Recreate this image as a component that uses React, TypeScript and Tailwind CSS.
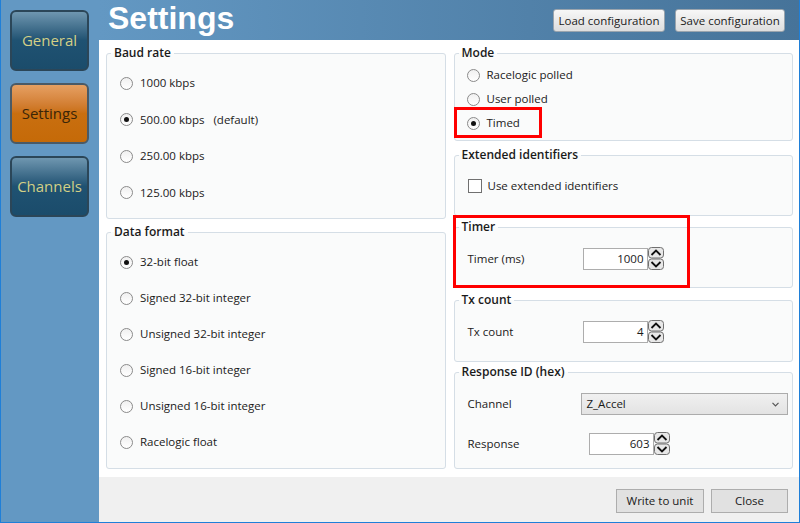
import type { ReactNode } from 'react'

const font = { fontFamily: '"Open Sans", "Noto Sans", sans-serif' }

function NavButton({ label, active }: { label: string; active?: boolean }) {
  return (
    <div
      className={
        'h-[61px] w-[79px] rounded-[6px] border-2 flex items-center justify-center text-[15px] ' +
        (active
          ? 'border-[#4a5a66] bg-gradient-to-b from-[#e6a062] via-[#c96f10] to-[#c56a08] text-[#3a2508]'
          : 'border-[#2b4658] bg-gradient-to-b from-[#6f97b0] via-[#1f5272] to-[#1b4c6b] text-[#d3cf86]')
      }
    >
      {label}
    </div>
  )
}

function Group({
  title,
  className,
  children,
}: {
  title: string
  className?: string
  children: ReactNode
}) {
  return (
    <fieldset
      className={
        'border border-[#d5dee6] rounded-[3px] bg-[#fafbfb] px-0 ' + (className ?? '')
      }
    >
      <legend className="ml-[4px] px-[3px] text-[12px] leading-[16px] font-semibold text-[#1a1a1a]">
        {title}
      </legend>
      {children}
    </fieldset>
  )
}

function Radio({ label, checked }: { label: ReactNode; checked?: boolean }) {
  return (
    <div className="flex items-center h-[16px] gap-[7px]">
      <div className="w-[13px] h-[13px] rounded-full border border-[#8a8a8a] bg-gradient-to-b from-[#f0f0f0] to-white flex items-center justify-center">
        {checked && <div className="w-[5px] h-[5px] rounded-full bg-[#111]" />}
      </div>
      <span className="text-[11.5px] text-[#1a1a1a]">{label}</span>
    </div>
  )
}

function Spinner() {
  return (
    <svg width="16" height="23" viewBox="0 0 16 23" className="shrink-0">
      <rect x="0.5" y="0.5" width="15" height="10.5" rx="3" fill="#e8e8e8" stroke="#707070" />
      <rect x="0.5" y="12" width="15" height="10.5" rx="3" fill="#e8e8e8" stroke="#707070" />
      <path d="M3.5 8 L8 3.5 L12.5 8" fill="none" stroke="#111" strokeWidth="1.8" />
      <path d="M3.5 15 L8 19.5 L12.5 15" fill="none" stroke="#111" strokeWidth="1.8" />
    </svg>
  )
}

function NumberField({ value, width = 65 }: { value: string; width?: number }) {
  return (
    <div className="flex items-center">
      <div
        className="h-[22px] border border-[#adadad] bg-white flex items-center justify-end pr-[3px] text-[11.5px] text-[#1a1a1a]"
        style={{ width }}
      >
        {value}
      </div>
      <Spinner />
    </div>
  )
}

export default function App() {
  return (
    <div
      className="w-[800px] h-[523px] flex bg-[#6398c3] border-x border-b border-[#1f7fd8] overflow-hidden"
      style={font}
    >
      <div className="w-[98px] shrink-0 flex flex-col gap-[12px] pl-[9px] pt-[10px]">
        <NavButton label="General" />
        <NavButton label="Settings" active />
        <NavButton label="Channels" />
      </div>

      <div className="flex-1 flex flex-col">
        <div className="h-[40px] shrink-0 flex items-center justify-between pl-[9px] pr-[14px] bg-gradient-to-r from-[#6398c3] to-[#467399]">
          <h1
            className="text-[32px] font-bold text-white leading-none -mt-[4px]"
            style={{ fontFamily: '"Liberation Sans", Arial, sans-serif' }}
          >
            Settings
          </h1>
          <div className="flex gap-[10px] mt-[1px]">
            <button className="h-[23px] w-[112px] rounded-[3px] border border-[#9aa4ad] bg-gradient-to-b from-[#f7f7f7] to-[#dedede] text-[11.5px] text-[#1a1a1a]">
              Load configuration
            </button>
            <button className="h-[23px] w-[110px] rounded-[3px] border border-[#9aa4ad] bg-gradient-to-b from-[#f7f7f7] to-[#dedede] text-[11.5px] text-[#1a1a1a]">
              Save configuration
            </button>
          </div>
        </div>

        <div className="h-[437px] shrink-0 bg-white grid grid-cols-2 gap-[8px] pl-[7px] pr-[6px] pt-[5px]">
          <div className="flex flex-col gap-[5px]">
            <Group title="Baud rate" className="h-[174px]">
              <div className="flex flex-col gap-[20.5px] pl-[13px] pt-[14px]">
                <Radio label="1000 kbps" />
                <Radio
                  label={
                    <>
                      500.00 kbps <span className="ml-[6px]">(default)</span>
                    </>
                  }
                  checked
                />
                <Radio label="250.00 kbps" />
                <Radio label="125.00 kbps" />
              </div>
            </Group>
            <Group title="Data format" className="h-[245px]">
              <div className="flex flex-col gap-[20px] pl-[13px] pt-[14px]">
                <Radio label="32-bit float" checked />
                <Radio label="Signed 32-bit integer" />
                <Radio label="Unsigned 32-bit integer" />
                <Radio label="Signed 16-bit integer" />
                <Radio label="Unsigned 16-bit integer" />
                <Radio label="Racelogic float" />
              </div>
            </Group>
          </div>

          <div className="flex flex-col">
            <Group title="Mode" className="h-[96px]">
              <div className="flex flex-col gap-[8px] pl-[12px] pt-[6px]">
                <Radio label="Racelogic polled" />
                <Radio label="User polled" />
                <div className="relative">
                  <div className="absolute -left-[13px] -top-[8px] w-[88px] h-[31px] border-[3px] border-[#ff0000]" />
                  <Radio label="Timed" checked />
                </div>
              </div>
            </Group>

            <Group title="Extended identifiers" className="h-[69px] mt-[6px]">
              <div className="flex items-center gap-[6px] pl-[13px] pt-[14px]">
                <div className="w-[14px] h-[14px] border border-[#707070] bg-white" />
                <span className="text-[11.5px] text-[#1a1a1a]">Use extended identifiers</span>
              </div>
            </Group>

            <div className="relative mt-[3px]">
              <div className="absolute -left-[1px] -top-[4px] w-[237px] h-[73px] border-[3px] border-[#ff0000] z-10 pointer-events-none" />
              <Group title="Timer" className="h-[69px]">
                <div className="flex items-center pl-[13px] pt-[12px]">
                  <span className="w-[115px] text-[11.5px] text-[#1a1a1a]">Timer (ms)</span>
                  <NumberField value="1000" />
                </div>
              </Group>
            </div>

            <Group title="Tx count" className="h-[70px] mt-[4px]">
              <div className="flex items-center pl-[13px] pt-[12px]">
                <span className="w-[115px] text-[11.5px] text-[#1a1a1a]">Tx count</span>
                <NumberField value="4" />
              </div>
            </Group>

            <Group title="Response ID (hex)" className="h-[105px] mt-[2px]">
              <div className="flex flex-col gap-[17px] pl-[13px] pt-[13px]">
                <div className="flex items-center">
                  <span className="w-[113px] text-[11.5px] text-[#1a1a1a]">Channel</span>
                  <div className="h-[22px] w-[207px] border border-[#acacac] bg-gradient-to-b from-[#f0f0f0] to-[#e3e3e3] flex items-center justify-between pl-[5px] pr-[8px] text-[11.5px] text-[#1a1a1a]">
                    <span>Z_Accel</span>
                    <svg width="7" height="5" viewBox="0 0 7 5">
                      <path d="M0.5 0.8 L3.5 3.8 L6.5 0.8" fill="none" stroke="#555" strokeWidth="1.2" />
                    </svg>
                  </div>
                </div>
                <div className="flex items-center">
                  <span className="w-[121px] text-[11.5px] text-[#1a1a1a]">Response</span>
                  <NumberField value="603" />
                </div>
              </div>
            </Group>
          </div>
        </div>

        <div className="flex-1 bg-[#f0f0f0] flex items-center justify-end gap-[7px] pr-[11px] pt-[2px]">
          <button className="h-[24px] w-[88px] border border-[#adadad] bg-[#e1e1e1] text-[11.5px] text-[#1a1a1a]">
            Write to unit
          </button>
          <button className="h-[24px] w-[77px] border border-[#adadad] bg-[#e1e1e1] text-[11.5px] text-[#1a1a1a]">
            Close
          </button>
        </div>
      </div>
    </div>
  )
}
